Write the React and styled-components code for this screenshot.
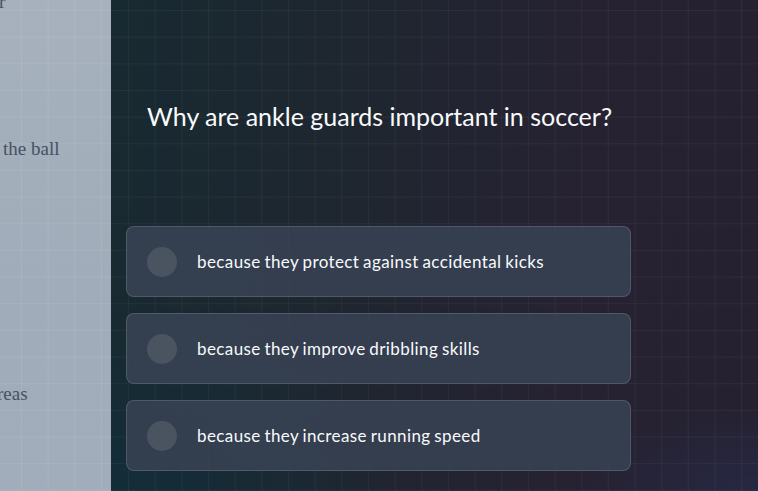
import React from "react";
import styled, { createGlobalStyle } from "styled-components";

const Global = createGlobalStyle`
  html, body { margin: 0; padding: 0; background: #1b2630; }
  body { width: 758px; height: 491px; overflow: hidden; }
  * { box-sizing: border-box; }
`;

const Page = styled.div`
  display: flex;
  width: 758px;
  height: 491px;
  overflow: hidden;
`;

const Backdrop = styled.aside`
  width: 111px;
  flex: none;
  display: flex;
  flex-direction: column;
  overflow: hidden;
  background-color: #a2aebb;
  background-image:
    linear-gradient(rgba(255, 255, 255, 0.07) 1px, transparent 1px),
    linear-gradient(90deg, rgba(255, 255, 255, 0.07) 1px, transparent 1px),
    linear-gradient(180deg, #a6b1bd 0%, #a0acb9 60%, #a1adba 100%);
  background-size: 26.67px 26.67px, 26.67px 26.67px, 100% 100%;
  background-position: 0 10px, 21px 0, 0 0;
  font-family: "Liberation Serif", "DejaVu Serif", serif;
  font-size: 19px;
  color: #465163;
`;

const BackLine = styled.div`
  white-space: nowrap;
  line-height: 22px;
  margin-top: ${(p) => p.$mt}px;
  margin-left: ${(p) => p.$ml}px;
`;

const Main = styled.main`
  flex: 1;
  display: flex;
  flex-direction: column;
  padding: 101px 15px 20px;
  background-color: #1d2630;
  background-image:
    linear-gradient(rgba(255, 255, 255, 0.045) 1px, transparent 1px),
    linear-gradient(90deg, rgba(255, 255, 255, 0.045) 1px, transparent 1px),
    radial-gradient(ellipse 260px 120px at 100% 100%, rgba(40, 56, 110, 0.3), transparent 70%),
    radial-gradient(ellipse 380px 240px at 0% 100%, rgba(14, 48, 62, 0.6), transparent 75%),
    linear-gradient(95deg, #182a31 0%, #1f2630 38%, #262232 70%, #252130 100%);
  background-size: 26.67px 26.67px, 26.67px 26.67px, 100% 100%, 100% 100%, 100% 100%;
  background-position: 0 10px, 17px 0, 0 0, 0 0, 0 0;
  font-family: Lato, "Open Sans", sans-serif;
`;

const Question = styled.h1`
  margin: 0 0 95px;
  padding: 0 21px;
  font-size: 25px;
  font-weight: 400;
  line-height: 30px;
  color: #f8fafc;
`;

const Options = styled.div`
  display: flex;
  flex-direction: column;
  gap: 16px;
  width: 505px;
`;

const Option = styled.button`
  display: flex;
  align-items: center;
  gap: 20px;
  height: 71px;
  padding: 0 20px;
  border: 1px solid rgba(100, 112, 130, 0.55);
  border-radius: 8px;
  background: rgba(56, 66, 83, 0.88);
  color: #f8fafc;
  font-family: inherit;
  font-size: 17px;
  letter-spacing: 0.4px;
  word-spacing: -1px;
  text-align: left;
  cursor: pointer;
`;

const Radio = styled.span`
  width: 30px;
  height: 30px;
  flex: none;
  border-radius: 50%;
  background: #4a5461;
`;

const options = [
  "because they protect against accidental kicks",
  "because they improve dribbling skills",
  "because they increase running speed",
];

export default function App() {
  return (
    <>
      <Global />
      <Page>
        <Backdrop>
          <BackLine $mt={-9} $ml={-1}>r</BackLine>
          <BackLine $mt={125} $ml={3}>the ball</BackLine>
          <BackLine $mt={223} $ml={-3}>reas</BackLine>
        </Backdrop>
        <Main>
          <Question>Why are ankle guards important in soccer?</Question>
          <Options>
            {options.map((o) => (
              <Option key={o}>
                <Radio />
                <span>{o}</span>
              </Option>
            ))}
          </Options>
        </Main>
      </Page>
    </>
  );
}
